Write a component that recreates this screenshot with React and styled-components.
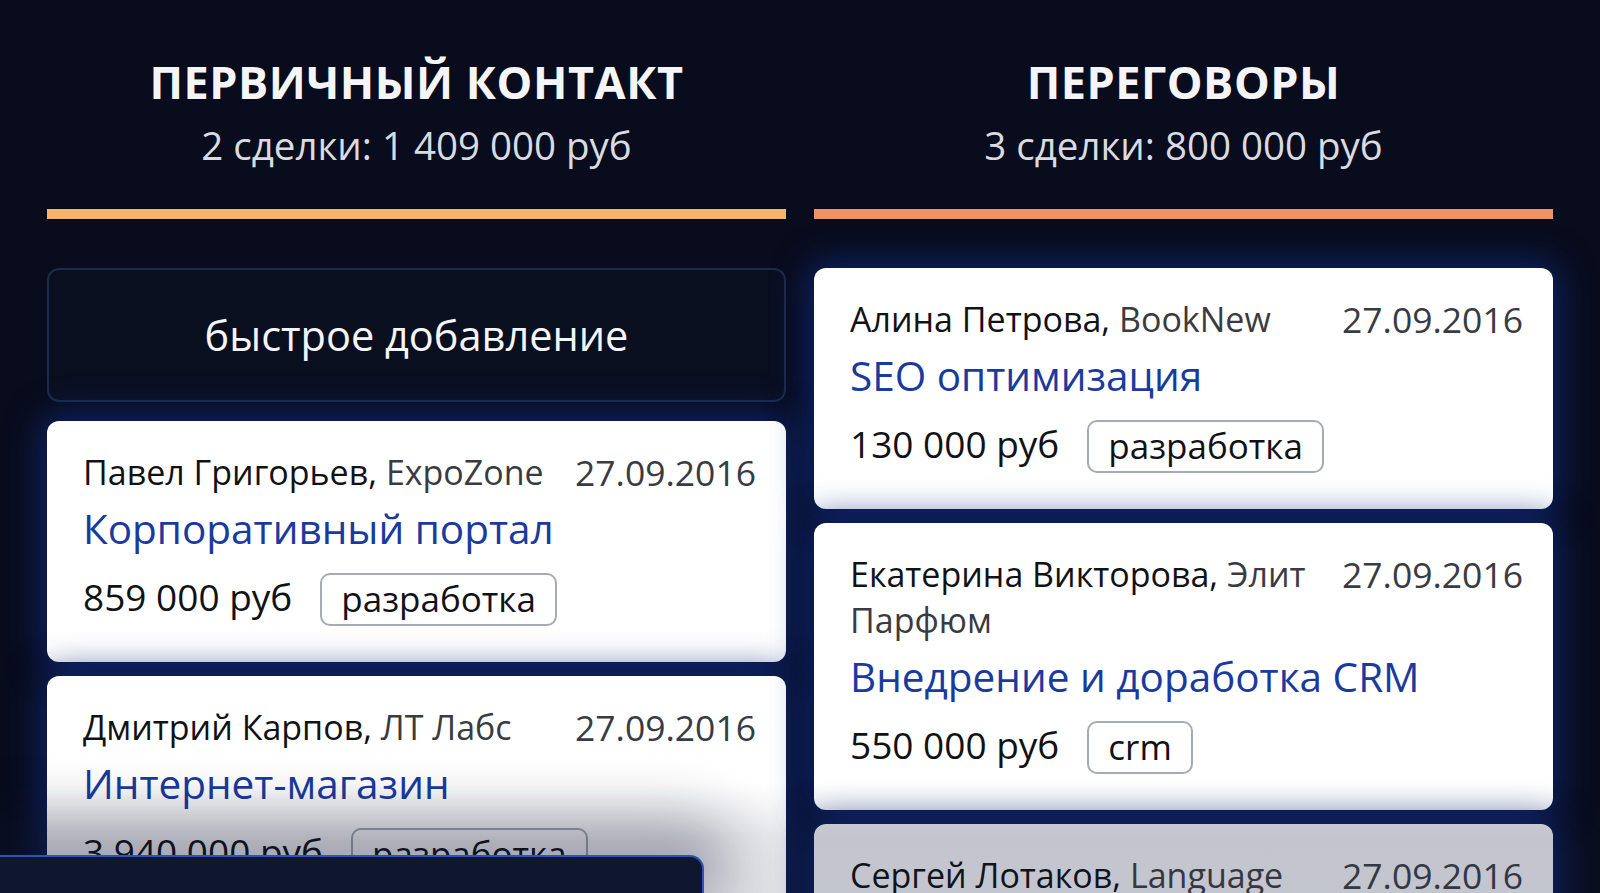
import React from "react";
import styled, { createGlobalStyle } from "styled-components";

const Global = createGlobalStyle`
  html, body { margin: 0; padding: 0; }
  body {
    background: #080c1c;
    font-family: "Open Sans", "Noto Sans", sans-serif;
    overflow: hidden;
    height: 893px;
  }
  #root { height: 893px; }
`;

const Page = styled.div`
  position: relative;
  height: 893px;
  overflow: hidden;
  background: #080c1c;
  padding: 0 47px;
  box-sizing: border-box;
`;

const Board = styled.div`
  display: grid;
  grid-template-columns: 1fr 1fr;
  column-gap: 28px;
`;

const Column = styled.section`
  display: flex;
  flex-direction: column;
`;

const Header = styled.header`
  display: flex;
  flex-direction: column;
  align-items: center;
  padding-top: 54px;
`;

const Title = styled.h2`
  margin: 0;
  font-size: 45px;
  line-height: 56px;
  font-weight: 700;
  letter-spacing: 0.012em;
  color: #f5f5f7;
  text-transform: uppercase;
`;

const Summary = styled.div`
  margin-top: 9px;
  font-size: 38.5px;
  line-height: 52px;
  color: #d9dbe1;
`;

const StageBar = styled.div`
  margin-top: 38px;
  height: 10px;
  background: ${(p) => p.$color};
  box-shadow: 0 0 0 1px rgba(0, 0, 0, 0.4);
`;

const Cards = styled.div`
  display: flex;
  flex-direction: column;
  gap: 14px;
  margin-top: 49px;
`;

const QuickAdd = styled.div`
  height: 134px;
  box-sizing: border-box;
  border: 2px solid #1d2a4b;
  border-radius: 12px;
  background: #0a0f20;
  display: flex;
  align-items: center;
  justify-content: center;
  color: #f4f5f8;
  font-size: 41.5px;
  margin-bottom: 5px;
`;

const Card = styled.article`
  background: ${(p) =>
    p.$dim ? "linear-gradient(180deg, #d6d7de 0%, #e4e5ea 55%, #e9eaef 100%)" : "#ffffff"};
  border-radius: 12px;
  padding: 28px 30px 36px 36px;
  box-shadow: 0 0 34px 6px rgba(16, 44, 128, 0.75);
`;

const TopRow = styled.div`
  display: flex;
  justify-content: space-between;
  align-items: flex-start;
  line-height: 46px;
`;

const Contact = styled.div`
  flex: 1;
  min-width: 0;
  font-size: 34px;
  color: #111216;
`;

const Company = styled.span`
  color: #3a3b40;
`;

const DateText = styled.div`
  flex-shrink: 0;
  margin-left: 24px;
  font-size: 35.5px;
  color: #383b44;
`;

const DealTitle = styled.div`
  margin-top: 8px;
  font-size: 40.5px;
  line-height: 52px;
  color: #1a3a9e;
`;

const PriceRow = styled.div`
  display: flex;
  align-items: flex-start;
  gap: 28px;
  margin-top: 18px;
`;

const Price = styled.div`
  font-size: 37px;
  line-height: 48px;
  color: #111216;
`;

const Tag = styled.div`
  height: 53px;
  box-sizing: border-box;
  border: 2px solid #a6aab6;
  border-radius: 10px;
  padding: 0 19px;
  font-size: 35px;
  line-height: 47px;
  color: #111216;
`;

const Dock = styled.div`
  position: absolute;
  left: 0;
  bottom: 0;
  width: 704px;
  height: 38px;
  box-sizing: border-box;
  background: #0e172f;
  border-top: 2px solid #2c52bd;
  border-right: 2px solid #2c52bd;
  border-top-right-radius: 14px;
  box-shadow: 0 -14px 60px 24px rgba(12, 18, 45, 0.32);
`;

const Vignette = styled.div`
  position: absolute;
  left: 0;
  right: 0;
  bottom: 0;
  height: 110px;
  pointer-events: none;
  background: linear-gradient(
    180deg,
    rgba(20, 28, 60, 0) 0%,
    rgba(20, 28, 60, 0.1) 50%,
    rgba(20, 28, 60, 0.12) 100%
  );
`;

const columns = [
  {
    title: "Первичный контакт",
    summary: "2 сделки: 1 409 000 руб",
    color: "#f6b56f",
    quickAdd: true,
    deals: [
      {
        person: "Павел Григорьев,",
        company: "ExpoZone",
        date: "27.09.2016",
        title: "Корпоративный портал",
        price: "859 000 руб",
        tag: "разработка",
      },
      {
        person: "Дмитрий Карпов,",
        company: "ЛТ Лабс",
        date: "27.09.2016",
        title: "Интернет-магазин",
        price: "3 940 000 руб",
        tag: "разработка",
      },
    ],
  },
  {
    title: "Переговоры",
    summary: "3 сделки: 800 000 руб",
    color: "#ea9468",
    quickAdd: false,
    deals: [
      {
        person: "Алина Петрова,",
        company: "BookNew",
        date: "27.09.2016",
        title: "SEO оптимизация",
        price: "130 000 руб",
        tag: "разработка",
      },
      {
        person: "Екатерина Викторова,",
        company: "Элит Парфюм",
        date: "27.09.2016",
        title: "Внедрение и доработка CRM",
        price: "550 000 руб",
        tag: "crm",
      },
      {
        person: "Сергей Лотаков,",
        company: "Language Link",
        date: "27.09.2016",
        title: "Корпоративное обучение",
        price: "120 000 руб",
        tag: "обучение",
        dim: true,
      },
    ],
  },
];

function DealCard({ deal }) {
  return (
    <Card $dim={deal.dim}>
      <TopRow>
        <Contact>
          {deal.person} <Company>{deal.company}</Company>
        </Contact>
        <DateText>{deal.date}</DateText>
      </TopRow>
      <DealTitle>{deal.title}</DealTitle>
      <PriceRow>
        <Price>{deal.price}</Price>
        <Tag>{deal.tag}</Tag>
      </PriceRow>
    </Card>
  );
}

export default function App() {
  return (
    <>
      <Global />
      <Page>
        <Board>
          {columns.map((col) => (
            <Column key={col.title}>
              <Header>
                <Title>{col.title}</Title>
                <Summary>{col.summary}</Summary>
              </Header>
              <StageBar $color={col.color} />
              <Cards>
                {col.quickAdd && <QuickAdd>быстрое добавление</QuickAdd>}
                {col.deals.map((d) => (
                  <DealCard key={d.person} deal={d} />
                ))}
              </Cards>
            </Column>
          ))}
        </Board>
        <Vignette />
        <Dock />
      </Page>
    </>
  );
}
